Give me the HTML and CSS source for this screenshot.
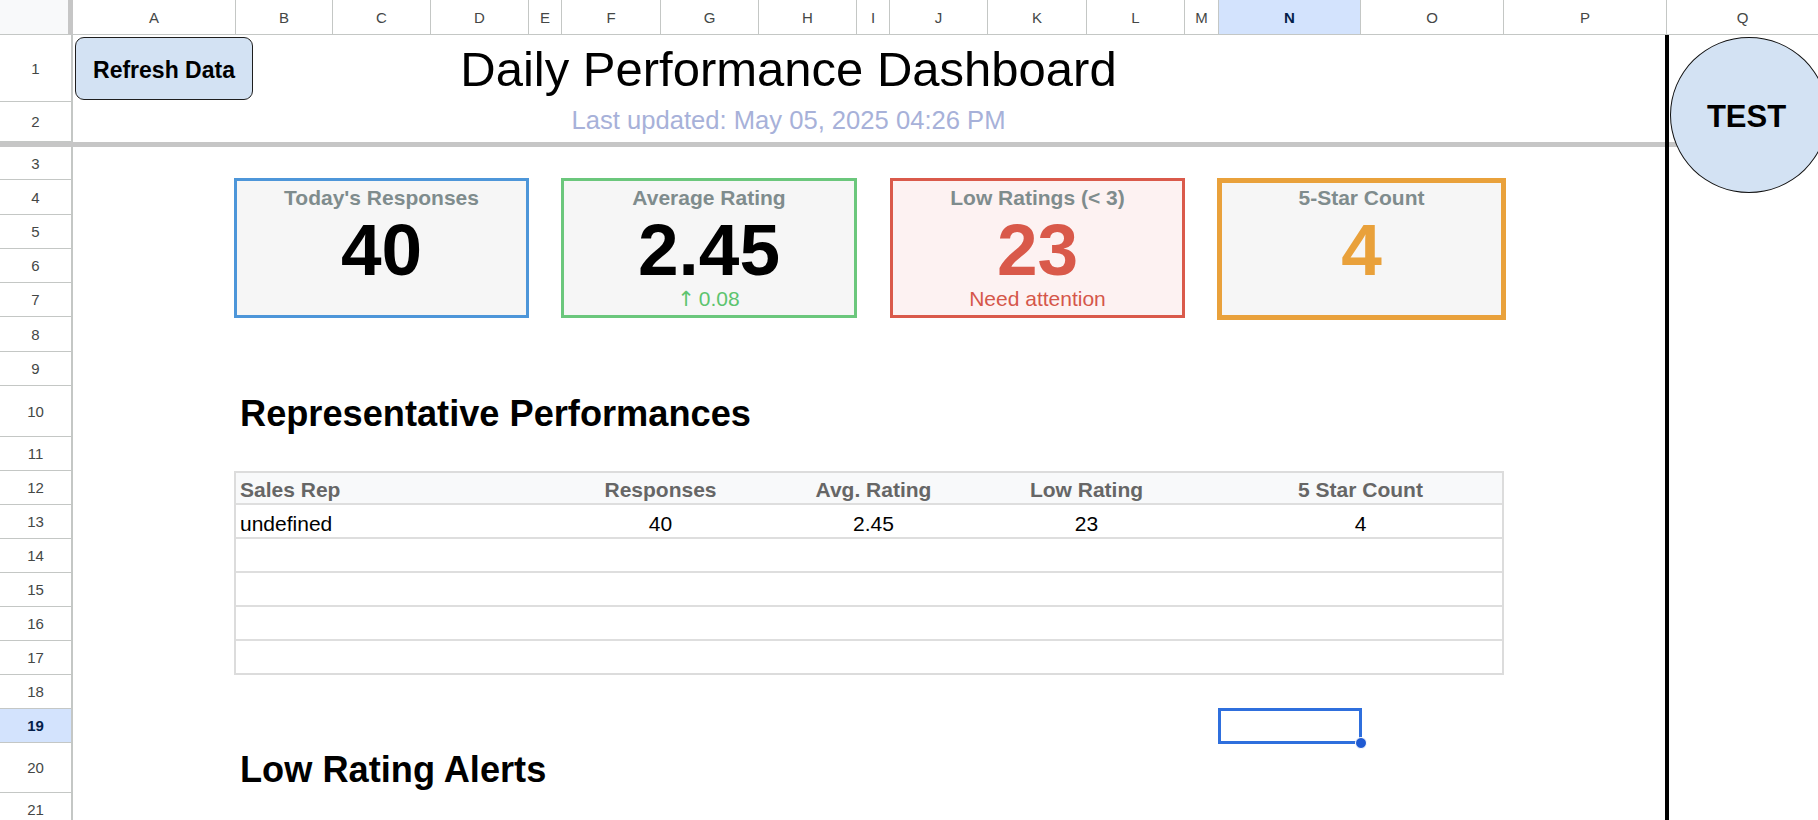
FILE: index.html
```html
<!DOCTYPE html>
<html>
<head>
<meta charset="utf-8">
<title>Daily Performance Dashboard</title>
<link rel="stylesheet" href="styles.css">
</head>
<body>
<div class="sheet">
  <div class="corner"></div>
  <div class="ch">A</div>
  <div class="ch">B</div>
  <div class="ch">C</div>
  <div class="ch">D</div>
  <div class="ch">E</div>
  <div class="ch">F</div>
  <div class="ch">G</div>
  <div class="ch">H</div>
  <div class="ch">I</div>
  <div class="ch">J</div>
  <div class="ch">K</div>
  <div class="ch">L</div>
  <div class="ch">M</div>
  <div class="ch sel">N</div>
  <div class="ch">O</div>
  <div class="ch">P</div>
  <div class="ch ch-last">Q</div>

  <div class="freeze"></div>

  <div class="rh">1</div>
  <div class="rh">2</div>
  <div class="rh">3</div>
  <div class="rh">4</div>
  <div class="rh">5</div>
  <div class="rh">6</div>
  <div class="rh">7</div>
  <div class="rh">8</div>
  <div class="rh">9</div>
  <div class="rh">10</div>
  <div class="rh">11</div>
  <div class="rh">12</div>
  <div class="rh">13</div>
  <div class="rh">14</div>
  <div class="rh">15</div>
  <div class="rh">16</div>
  <div class="rh">17</div>
  <div class="rh">18</div>
  <div class="rh sel">19</div>
  <div class="rh">20</div>
  <div class="rh">21</div>

  <div class="pq-line"></div>

  <div class="refresh">Refresh Data</div>
  <h1 class="title">Daily Performance Dashboard</h1>
  <div class="updated">Last updated: May 05, 2025 04:26 PM</div>

  <div class="card card-blue">
    <div class="card-title">Today's Responses</div>
    <div class="card-num">40</div>
  </div>
  <div class="card card-green">
    <div class="card-title">Average Rating</div>
    <div class="card-num">2.45</div>
    <div class="card-sub sub-green"><span class="arrow">↑</span> 0.08</div>
  </div>
  <div class="card card-red">
    <div class="card-title">Low Ratings (&lt; 3)</div>
    <div class="card-num num-red">23</div>
    <div class="card-sub sub-red">Need attention</div>
  </div>
  <div class="card card-orange">
    <div class="card-title">5-Star Count</div>
    <div class="card-num num-orange">4</div>
  </div>

  <h2 class="section section-reps">Representative Performances</h2>

  <div class="rep-table">
    <div class="trow thead">
      <div class="tc tl">Sales Rep</div>
      <div class="tc">Responses</div>
      <div class="tc">Avg. Rating</div>
      <div class="tc">Low Rating</div>
      <div class="tc"></div>
      <div class="tc">5 Star Count</div>
    </div>
    <div class="trow">
      <div class="tc tl">undefined</div>
      <div class="tc">40</div>
      <div class="tc">2.45</div>
      <div class="tc">23</div>
      <div class="tc"></div>
      <div class="tc">4</div>
    </div>
    <div class="trow"></div>
    <div class="trow"></div>
    <div class="trow"></div>
    <div class="trow tlast"></div>
  </div>

  <div class="cursor"><span class="handle"></span></div>

  <h2 class="section section-alerts">Low Rating Alerts</h2>

  <div class="test-shape">TEST</div>
</div>
</body>
</html>
```
FILE: styles.css
```css
* {
  box-sizing: border-box;
}

html,
body {
  margin: 0;
  padding: 0;
  background: #ffffff;
}

body {
  width: 1818px;
  height: 820px;
  overflow: hidden;
  font-family: "Liberation Sans", Arial, sans-serif;
  color: #000000;
}

.sheet {
  position: relative;
  display: grid;
  grid-template-columns: 73px 163px 97px 98px 98px 33px 99px 98px 98px 33px 98px 99px 98px 34px 142px 143px 163px 151px;
  grid-template-rows: 35px 67px 40px 5px 33px 35px 34px 34px 34px 35px 34px 51px 34px 34px 34px 34px 34px 34px 34px 34px 34px 50px 34px;
  width: 1818px;
  height: 820px;
  overflow: hidden;
}

/* ---------- headers ---------- */
.corner {
  grid-row: 1;
  background: #f8f9fa;
  border-right: 5px solid #c6c6c6;
  border-bottom: 1px solid #c4c7c5;
}

.ch {
  grid-row: 1;
  display: flex;
  align-items: center;
  justify-content: center;
  border-right: 1px solid #c4c7c5;
  border-bottom: 1px solid #c4c7c5;
  font-size: 15px;
  color: #444746;
  padding-top: 1px;
}

.ch-last {
  border-right: none;
}

.rh {
  grid-column: 1;
  display: flex;
  align-items: center;
  justify-content: center;
  border-bottom: 1px solid #c4c7c5;
  border-right: 2px solid #c4c7c5;
  font-size: 15px;
  color: #444746;
}

.sel {
  background: #d3e3fd;
  color: #041e49;
  font-weight: bold;
}

.freeze {
  grid-column: 1 / -1;
  grid-row: 4;
  background: #c6c6c6;
}

.pq-line {
  grid-column: 18;
  grid-row: 2 / -1;
  margin-left: -2px;
  border-left: 4px solid #000000;
}

/* ---------- top area ---------- */
.refresh {
  grid-column: 2 / 4;
  grid-row: 2;
  justify-self: start;
  align-self: start;
  width: 178px;
  height: 63px;
  margin: 2px 0 0 2px;
  padding-top: 4px;
  display: flex;
  align-items: center;
  justify-content: center;
  background: #d3e2f3;
  border: 1.5px solid #1e1e1e;
  border-radius: 9px;
  font-size: 23px;
  font-weight: bold;
  color: #000000;
}

.title {
  grid-column: 2 / 17;
  grid-row: 2;
  margin: 0;
  padding-top: 6px;
  text-align: center;
  font-size: 49px;
  line-height: 56px;
  font-weight: normal;
  color: #000000;
}

.updated {
  grid-column: 2 / 17;
  grid-row: 3;
  padding-top: 4px;
  text-align: center;
  font-size: 25.6px;
  line-height: 29px;
  color: #a7b1d9;
}

/* ---------- cards ---------- */
.card {
  grid-row: 6 / 10;
  display: flex;
  flex-direction: column;
  align-items: center;
  padding-top: 5px;
  background: #f6f6f6;
  border: 3px solid #4d96d9;
}

.card-blue {
  grid-column: 3 / 6;
  margin: -2px 0 -1px -2px;
  border-color: #4d96d9;
}

.card-green {
  grid-column: 7 / 10;
  margin: -2px 0 -1px -1px;
  border-color: #6bc77c;
}

.card-red {
  grid-column: 11 / 14;
  margin: -2px 0 -1px 0;
  border-color: #da5a4b;
  background: #fdf2f2;
}

.card-orange {
  grid-column: 15 / 17;
  margin: -2px -2px -3px -2px;
  padding-top: 3px;
  border: 5px solid #e9a13b;
}

.card-title {
  font-size: 21px;
  line-height: 24px;
  font-weight: bold;
  color: #7f8c8d;
}

.card-num {
  margin-top: 9px;
  font-size: 73px;
  line-height: 62px;
  font-weight: bold;
  color: #000000;
}

.num-red {
  color: #d9594a;
}

.num-orange {
  color: #e9a13b;
}

.card-sub {
  margin-top: 6px;
  font-size: 21px;
  line-height: 24px;
  white-space: nowrap;
}

.arrow {
  margin: 0 -2px 0 -1px;
  font-family: "DejaVu Sans", sans-serif;
  font-size: 21px;
}

.sub-green {
  color: #5cc46e;
}

.sub-red {
  color: #d5574a;
}

/* ---------- sections ---------- */
.section {
  grid-column: 3 / 17;
  align-self: end;
  margin: 0;
  padding: 0 0 3px 4px;
  font-size: 36.2px;
  line-height: 41px;
  font-weight: bold;
  color: #000000;
}

.section-reps {
  grid-row: 12;
}

.section-alerts {
  grid-row: 22;
}

/* ---------- table ---------- */
.rep-table {
  grid-column: 3 / 17;
  grid-row: 14 / 20;
  margin-left: -2px;
  display: grid;
  grid-template-rows: 32px 34px 34px 34px 34px 32px;
  border: 2px solid #dcdcdc;
}

.trow {
  display: grid;
  grid-template-columns: 326px 197px 229px 197px 34px 283px;
  border-bottom: 2px solid #dedede;
  font-size: 21px;
  line-height: 32px;
  padding-top: 3px;
  color: #000000;
}

.thead {
  background: #f8f9fa;
  font-weight: bold;
  color: #666666;
  line-height: 30px;
  padding-top: 2px;
}

.tlast {
  border-bottom: none;
}

.tc {
  text-align: center;
  white-space: nowrap;
}

.tl {
  text-align: left;
  padding-left: 4px;
}

/* ---------- selection cursor ---------- */
.cursor {
  grid-column: 15;
  grid-row: 21;
  position: relative;
  margin: -1px;
  border: 3px solid #2f6fdd;
}

.handle {
  position: absolute;
  right: -8px;
  bottom: -8px;
  width: 12px;
  height: 12px;
  border-radius: 50%;
  background: #1f5ad3;
  border: 1px solid #ffffff;
}

/* ---------- drawing ---------- */
.test-shape {
  position: absolute;
  left: 1670px;
  top: 37px;
  width: 158px;
  height: 156px;
  display: flex;
  align-items: center;
  justify-content: center;
  padding: 3px 5px 0 0;
  background: #d3e2f3;
  border: 1.5px solid #111111;
  border-radius: 50%;
  font-size: 31px;
  font-weight: bold;
  color: #000000;
}
```
